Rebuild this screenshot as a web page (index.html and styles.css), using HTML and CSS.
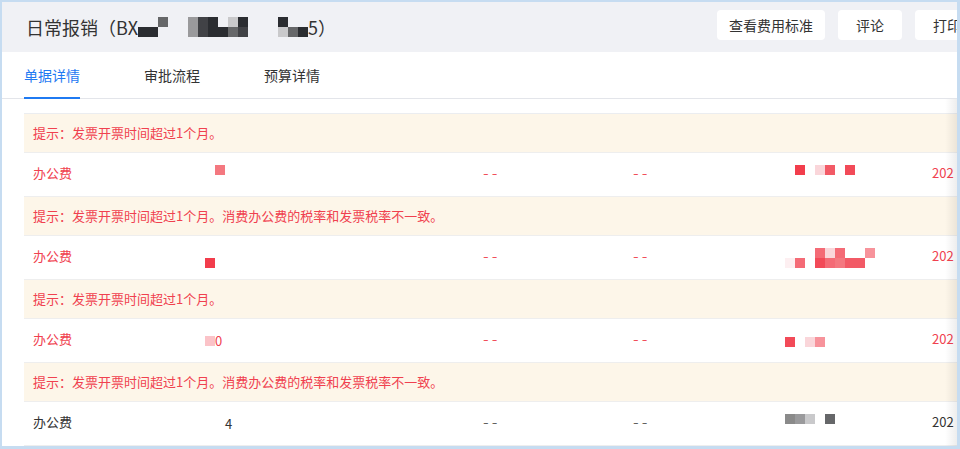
FILE: index.html
```html
<!DOCTYPE html>
<html lang="zh-CN">
<head>
  <meta charset="UTF-8" />
  <meta name="viewport" content="width=device-width, initial-scale=1.0"/>
  <title>日常报销</title>
  <link rel="stylesheet" href="styles.css">
</head>
<body>
  <div class="frame">

    <header class="head">
      <h1 class="title">日常报销（BX<span class="mosaic">
        <i></i><i class="g1"></i>
        <i></i><i class="g1"></i>
        <i class="g3"></i><i></i>
        <i></i><i></i>
        <i></i><i></i>
        <i class="g5"></i><i class="g5"></i>
        <i class="g2"></i><i class="g2"></i>
        <i class="g1"></i><i class="g1"></i>
        <i></i><i class="g1"></i>
        <i class="g6"></i><i class="g3"></i>
        <i class="g1"></i><i class="g2"></i>
        <i></i><i></i>
        <i></i><i></i>
        <i></i><i></i>
        <i class="g1"></i><i class="g6"></i>
        <i></i><i class="g3"></i>
        <i></i><i class="g1"></i>
      </span>5）</h1>
      <div class="actions">
        <button class="btn">查看费用标准</button>
        <button class="btn">评论</button>
        <button class="btn">打印</button>
      </div>
    </header>

    <nav class="tabs">
      <div class="tab active">单据详情</div>
      <div class="tab">审批流程</div>
      <div class="tab">预算详情</div>
    </nav>

    <div class="content">
      <div class="table">

        <div class="tip">提示：发票开票时间超过1个月。</div>
        <div class="row warn">
          <div class="text">办公费</div>
          <div><span class="mosaic">
            <i></i><i></i><i></i><i></i><i></i><i></i><i class="r5"></i><i></i>
          </span></div>
          <div class="dash">--</div>
          <div class="dash">--</div>
          <div><span class="mosaic">
            <i></i><i></i><i class="r1"></i><i></i><i></i><i></i>
            <i class="r8"></i><i></i><i class="r3"></i><i></i><i></i><i></i>
            <i class="r2"></i><i></i>
          </span></div>
          <div class="text">202</div>
        </div>

        <div class="tip">提示：发票开票时间超过1个月。消费办公费的税率和发票税率不一致。</div>
        <div class="row warn">
          <div class="text">办公费</div>
          <div><span class="mosaic">
            <i></i><i></i><i></i><i></i><i></i><i class="r1"></i>
          </span></div>
          <div class="dash">--</div>
          <div class="dash">--</div>
          <div><span class="mosaic">
            <i></i><i class="r9"></i>
            <i></i><i class="r4"></i>
            <i></i><i></i>
            <i class="r4"></i><i class="r2"></i>
            <i class="r8"></i><i class="r4"></i>
            <i class="r4"></i><i class="r5"></i>
            <i></i><i class="r3"></i>
            <i></i><i class="r3"></i>
            <i class="r6"></i><i></i>
          </span></div>
          <div class="text">202</div>
        </div>

        <div class="tip">提示：发票开票时间超过1个月。</div>
        <div class="row warn">
          <div class="text">办公费</div>
          <div class="inline"><span class="mosaic single">
            <i></i><i></i><i class="r7"></i>
          </span><span class="text">0</span></div>
          <div class="dash">--</div>
          <div class="dash">--</div>
          <div><span class="mosaic single">
            <i class="r2"></i><i></i><i class="r8"></i><i class="r6"></i>
          </span></div>
          <div class="text">202</div>
        </div>

        <div class="tip">提示：发票开票时间超过1个月。消费办公费的税率和发票税率不一致。</div>
        <div class="row">
          <div class="text">办公费</div>
          <div class="inline"><span class="mosaic single">
            <i></i><i></i><i></i><i></i>
          </span><span class="text">4</span></div>
          <div class="dash muted">--</div>
          <div class="dash muted">--</div>
          <div><span class="mosaic">
            <i class="g4"></i><i></i><i class="g5"></i><i></i><i class="g6"></i><i></i>
            <i></i><i></i><i class="g3"></i><i></i>
          </span></div>
          <div class="text">202</div>
        </div>

      </div>
    </div>

  </div>
</body>
</html>
```

FILE: styles.css
```css
* { box-sizing: border-box; }
body {
  margin: 0;
  font-family: "Noto Sans CJK SC", "Noto Sans", sans-serif;
  color: #333;
  background: #fff;
}
.frame {
  width: 960px;
  height: 449px;
  border: 2px solid #c6dcf1;
  border-right-width: 3px;
  border-bottom-width: 3px;
  overflow: hidden;
}

/* header */
.head {
  display: flex;
  align-items: flex-start;
  width: 1001px;
  height: 50px;
  padding: 8px 24px 0 24px;
  background: #f0f1f5;
}
.title {
  display: flex;
  align-items: center;
  margin: 0;
  font-size: 18px;
  font-weight: normal;
  line-height: 34px;
  color: #333;
}
.actions {
  display: flex;
  gap: 13px;
  margin-left: auto;
}
.btn {
  height: 30px;
  min-width: 64px;
  padding: 0 12px;
  font-family: inherit;
  font-size: 14px;
  color: #333;
  background: #fff;
  border: none;
  border-radius: 4px;
  cursor: pointer;
}

/* tabs */
.tabs {
  display: flex;
  gap: 64px;
  height: 47px;
  padding-left: 22px;
  border-bottom: 1px solid #e3e5ea;
}
.tab {
  height: 47px;
  margin-bottom: -1px;
  line-height: 46px;
  font-size: 14px;
  color: #333;
  border-bottom: 2px solid transparent;
}
.tab.active {
  color: #1f7af2;
  border-bottom-color: #1f7af2;
}

/* table */
.content {
  position: relative;
  padding: 14px 0 0 22px;
}
.content::after {
  content: "";
  position: absolute;
  top: 0;
  right: 0;
  bottom: 0;
  width: 12px;
  background: linear-gradient(to right, rgba(0,0,0,0), rgba(0,0,0,0.07));
}
.table {
  width: 1000px;
  border-top: 1px solid #ebedf0;
  font-size: 13px;
}
.tip {
  height: 39px;
  padding-left: 9px;
  line-height: 38px;
  color: #f0414f;
  background: #fdf6e9;
  border-bottom: 1px solid #eeeeee;
}
.row {
  display: grid;
  grid-template-columns: 152px 298px 150px 152px 147px 1fr;
  align-items: center;
  height: 44px;
  padding-left: 9px;
  border-bottom: 1px solid #eeeeee;
  color: #333;
}
.row.warn { color: #f0414f; }
.text { margin-bottom: 4px; }
.dash {
  margin-bottom: 5px;
  font-size: 17px;
  font-weight: 300;
  letter-spacing: 3px;
  line-height: 20px;
}
.muted { color: #555; }
.inline {
  display: flex;
  align-items: center;
}
.inline .text { margin-bottom: 0; }

/* redaction blocks */
.mosaic {
  display: inline-grid;
  grid-auto-flow: column;
  grid-template-rows: 10px 10px;
  grid-auto-columns: 10px;
  vertical-align: middle;
}
.mosaic.single { grid-template-rows: 10px; }
.mosaic i { display: block; }
.g1 { background: #2b2d31; }
.g2 { background: #414246; }
.g3 { background: #666769; }
.g4 { background: #8a8a8a; }
.g5 { background: #9a9a9c; }
.g6 { background: #c9c9cb; }
.r1 { background: #f23d4c; }
.r2 { background: #f24a58; }
.r3 { background: #f25a66; }
.r4 { background: #f46b76; }
.r5 { background: #f47880; }
.r6 { background: #f7939b; }
.r7 { background: #fbc3c8; }
.r8 { background: #fad6da; }
.r9 { background: #fdeff1; }
```
